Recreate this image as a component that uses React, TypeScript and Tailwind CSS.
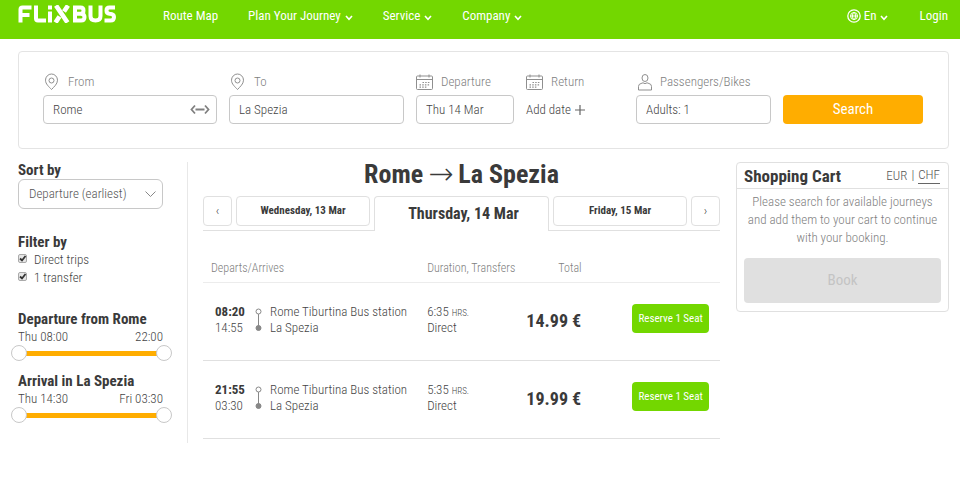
import { useState } from "react";
import type { ReactNode } from "react";

const navItems = [
  { label: "Route Map", menu: false },
  { label: "Plan Your Journey", menu: true },
  { label: "Service", menu: true },
  { label: "Company", menu: true },
];

const trips = [
  { departs: "08:20", arrives: "14:55", from: "Rome Tiburtina Bus station", to: "La Spezia", duration: "6:35", price: "14.99 €" },
  { departs: "21:55", arrives: "03:30", from: "Rome Tiburtina Bus station", to: "La Spezia", duration: "5:35", price: "19.99 €" },
];

function Logo() {
  return (
    <svg width="98" height="18" viewBox="0 0 98 18" fill="none" stroke="#fff" strokeWidth="4" role="img" aria-label="FlixBus">
      <path d="M2.5 17.5V4.5Q2.5 2.5 4.5 2.5H13.5M2.5 10H11.5" />
      <path d="M18 .5V13.5Q18 15.5 20 15.5H28" />
      <path d="M32 6.5V17.5" />
      <path d="M32 .5V4.5" />
      <path d="M38 .5L49.5 17.5M50 .5L46 6.5M41.5 11.5L37.5 17.5" strokeWidth="4.6" />
      <path d="M57 2.5H62.5Q65.500 2.5 65.500 5.5Q65.500 8.700 62.500 8.700H57H63Q66.500 9 66.500 12Q66.500 15.5 63 15.5H57ZM57 .7V17.300" />
      <path d="M72.500 .5V11Q72.500 15.5 77.500 15.5Q82.500 15.5 82.500 11V.5" />
      <path d="M97 2.5H91.500Q88.500 2.5 88.500 5.500Q88.500 8.500 91.500 8.800Q96 9 96 12Q96 15.5 92.500 15.5H86.500" />
    </svg>
  );
}

function Caret() {
  return (
    <svg width="8" height="6" viewBox="0 0 8 6" fill="none" stroke="currentColor" strokeWidth="1.6" className="mt-1" aria-hidden="true">
      <path d="M1 1L4 4.300L7 1" />
    </svg>
  );
}

function PinIcon() {
  return (
    <svg width="17" height="18" viewBox="0 0 17 18" fill="none" stroke="#8f8f8f" aria-hidden="true">
      <path d="M8.5 16.5C6 13.8 2.5 11 2.5 7.2A6 6.200 0 0 1 14.5 7.2C14.5 11 11 13.8 8.5 16.5Z" />
      <circle cx="8.5" cy="7.5" r="2.5" />
    </svg>
  );
}

function CalendarIcon() {
  return (
    <svg width="17" height="16" viewBox="0 0 17 16" fill="none" stroke="#8f8f8f" aria-hidden="true">
      <rect x=".5" y="2" width="16" height="13.5" rx="1" />
      <path d="M.5 5.5H16.5M4 .5V3.5M13 .5V3.5" />
      <path d="M6.5 8.5H14M3.5 10.8H14M3.5 13.2H11" strokeDasharray="1.5 1.2" strokeWidth="1.2" />
    </svg>
  );
}

function PersonIcon() {
  return (
    <svg width="14" height="17" viewBox="0 0 14 17" fill="none" stroke="#8f8f8f" aria-hidden="true">
      <ellipse cx="7" cy="4" rx="3" ry="3.5" />
      <path d="M.5 16V12.5Q.5 10 3 9.5L5 8.8Q7 10.5 9 8.8L11 9.5Q13.5 10 13.5 12.5V16Z" />
    </svg>
  );
}

function GlobeIcon() {
  return (
    <svg width="14" height="14" viewBox="0 0 14 14" fill="none" stroke="currentColor" aria-hidden="true">
      <circle cx="7" cy="7" r="6.2" strokeWidth="1.3" />
      <circle cx="7" cy="7" r="3.5" />
      <ellipse cx="7" cy="7" rx="1.5" ry="3.5" />
      <path d="M3.5 7H10.5" />
    </svg>
  );
}

function Field({ id, icon, label, children }: { id: string; icon: ReactNode; label: string; children: ReactNode }) {
  return (
    <div className="flex min-w-0 flex-col gap-[3px]">
      <label htmlFor={id} className="flex h-5 items-center gap-2 text-[#808080]">
        {icon}
        {label}
      </label>
      {children}
    </div>
  );
}

const inputClass = "h-[29px] w-full min-w-0 rounded border border-[#c8c8c8] bg-white px-[9px] text-[#444] outline-none";

function CheckItem({ id, label }: { id: string; label: string }) {
  const [on, setOn] = useState(true);
  return (
    <div className="flex h-[18px] items-center gap-[7px]">
      <span className="relative mb-[3px] flex">
        <input
          id={id}
          type="checkbox"
          checked={on}
          onChange={() => setOn(!on)}
          className="size-[9px] appearance-none rounded-xs border border-[#aaa] bg-[#e6e6e6]"
        />
        {on && (
          <svg width="9" height="9" viewBox="0 0 9 9" fill="none" stroke="#333" strokeWidth="1.8" className="pointer-events-none absolute inset-0" aria-hidden="true">
            <path d="M2 4.5L4 6.5L7.5 2" />
          </svg>
        )}
      </span>
      <label htmlFor={id}>{label}</label>
    </div>
  );
}

const thumbClass =
  "pointer-events-none absolute inset-0 m-0 w-full appearance-none bg-transparent [&::-webkit-slider-thumb]:pointer-events-auto [&::-webkit-slider-thumb]:size-4 [&::-webkit-slider-thumb]:appearance-none [&::-webkit-slider-thumb]:rounded-full [&::-webkit-slider-thumb]:border [&::-webkit-slider-thumb]:border-[#c8c8c8] [&::-webkit-slider-thumb]:bg-white";

function TimeRange({ title, from, to }: { title: string; from: string; to: string }) {
  return (
    <section>
      <h2 className="text-[15px] leading-[18px] font-bold text-[#3a3a3a]">{title}</h2>
      <div className="flex h-[17px] items-center justify-between">
        <span>{from}</span>
        <span>{to}</span>
      </div>
      <div className="relative -mr-[9px] -ml-[7px] flex h-4 items-center px-2">
        <div className="h-[5px] w-full bg-[#ffad00]" />
        <input type="range" aria-label={`${title}, earliest`} min={0} max={100} defaultValue={0} className={thumbClass} />
        <input type="range" aria-label={`${title}, latest`} min={0} max={100} defaultValue={100} className={thumbClass} />
      </div>
    </section>
  );
}

const dayClass = "h-[30px] rounded border border-[#e0e0e0] text-[#3a3a3a]";

export default function App() {
  return (
    <div className="min-h-screen bg-white font-['Roboto_Condensed','Liberation_Sans_Narrow',Roboto,sans-serif] text-[13px] font-light text-[#444]">
      <header className="flex h-[39px] items-start bg-[#73d700] pr-3 pl-[18px] font-normal text-white">
        <a href="#home" className="mt-[5px]">
          <Logo />
        </a>
        <nav className="ml-[47px] flex h-8 flex-1 items-center gap-[30px]">
          {navItems.map((item) => (
            <a key={item.label} href="#menu" className="flex items-center gap-1 whitespace-nowrap">
              {item.label}
              {item.menu && <Caret />}
            </a>
          ))}
        </nav>
        <div className="flex h-8 items-center gap-8">
          <button type="button" className="flex items-center gap-[3px]">
            <GlobeIcon />
            En
            <Caret />
          </button>
          <a href="#login">Login</a>
        </div>
      </header>

      <form
        onSubmit={(e) => e.preventDefault()}
        className="mt-3 mr-[11px] ml-[18px] grid grid-cols-[174fr_175fr_98fr_98fr_135fr_140fr] items-end gap-3 rounded border border-[#e4e4e4] pt-5 pr-[25px] pb-6 pl-6"
      >
        <Field id="from" icon={<PinIcon />} label="From">
          <div className="relative">
            <input id="from" defaultValue="Rome" className={inputClass} />
            <button type="button" aria-label="Swap cities" className="absolute top-[9px] right-[7px]">
              <svg width="20" height="11" viewBox="0 0 20 11" fill="none" stroke="#808080" strokeWidth="1.8">
                <path d="M5 1.5L1.5 5.5L5 9.5M15 1.5L18.5 5.5L15 9.5M5.5 5.5H14.5" />
              </svg>
            </button>
          </div>
        </Field>
        <Field id="to" icon={<PinIcon />} label="To">
          <input id="to" defaultValue="La Spezia" className={inputClass} />
        </Field>
        <Field id="departure" icon={<CalendarIcon />} label="Departure">
          <input id="departure" defaultValue="Thu 14 Mar" className={inputClass} />
        </Field>
        <Field id="return" icon={<CalendarIcon />} label="Return">
          <button id="return" type="button" className="flex h-[29px] items-center gap-1 text-[#444]">
            Add date
            <svg width="10" height="10" viewBox="0 0 10 10" stroke="#666" strokeWidth="1.2" aria-hidden="true">
              <path d="M5 0V10M0 5H10" />
            </svg>
          </button>
        </Field>
        <Field id="passengers" icon={<span className="pl-[2px]"><PersonIcon /></span>} label="Passengers/Bikes">
          <input id="passengers" defaultValue="Adults: 1" className={inputClass} />
        </Field>
        <button type="submit" className="h-[29px] rounded bg-[#ffad00] text-[15px] font-normal text-white">
          Search
        </button>
      </form>

      <main className="mt-[13px] mr-[11px] ml-[18px] flex items-start">
        <aside className="w-[170px] shrink-0 border-r border-[#e8e8e8] pr-6 pb-5">
          <label htmlFor="sort" className="block text-[15px] leading-[17px] font-bold text-[#3a3a3a]">
            Sort by
          </label>
          <div className="relative">
            <select id="sort" className="h-[30px] w-full appearance-none rounded-md border border-[#c8c8c8] bg-white px-[10px] text-[#555]">
              <option>Departure (earliest)</option>
            </select>
            <svg width="11" height="7" viewBox="0 0 11 7" fill="none" stroke="#888" className="pointer-events-none absolute top-3 right-[7px]" aria-hidden="true">
              <path d="M.5 .5L5.5 5.5L10.5 .5" />
            </svg>
          </div>
          <h2 className="mt-6 text-[15px] leading-[18px] font-bold text-[#3a3a3a]">Filter by</h2>
          <CheckItem id="direct" label="Direct trips" />
          <CheckItem id="transfer" label="1 transfer" />
          <div className="mt-[23px] flex flex-col gap-[11px]">
            <TimeRange title="Departure from Rome" from="Thu 08:00" to="22:00" />
            <TimeRange title="Arrival in La Spezia" from="Thu 14:30" to="Fri 03:30" />
          </div>
        </aside>

        <section className="mr-4 ml-[15px] min-w-0 flex-1">
          <h1 className="flex h-[34px] justify-center gap-[5px] text-[26px] leading-6 font-bold text-[#3a3a3a]">
            Rome <span className="font-['DejaVu_Sans'] text-[30px] font-light">→</span> La Spezia
          </h1>
          <div className="flex">
            <div className="flex flex-[172] gap-1 border-b border-[#e0e0e0] pr-1 pb-1">
              <button type="button" aria-label="Previous day" className={`${dayClass} w-[29px]`}>‹</button>
              <button type="button" className={`${dayClass} flex-1 text-[11px] font-bold`}>Wednesday, 13 Mar</button>
            </div>
            <button type="button" className="flex-[174] rounded-t border border-b-0 border-[#e0e0e0] pl-1 text-base font-bold text-[#3a3a3a]">
              Thursday, 14 Mar
            </button>
            <div className="flex flex-[172] gap-1 border-b border-[#e0e0e0] pb-1 pl-1">
              <button type="button" className={`${dayClass} flex-1 text-[11px] font-bold`}>Friday, 15 Mar</button>
              <button type="button" aria-label="Next day" className={`${dayClass} w-[29px]`}>›</button>
            </div>
          </div>
          <table className="mt-6 w-full table-fixed border-collapse text-left">
            <colgroup>
              <col className="w-[42%]" />
              <col className="w-[19%]" />
              <col className="w-[22%]" />
              <col className="w-[17%]" />
            </colgroup>
            <thead className="text-xs text-[#808080]">
              <tr className="h-[27px] border-b border-[#ececec]">
                <th className="pl-2 font-light">Departs/Arrives</th>
                <th className="pl-[7px] font-light whitespace-nowrap">Duration, Transfers</th>
                <th className="pl-10 font-light">Total</th>
                <th aria-label="Reserve" />
              </tr>
            </thead>
            <tbody>
              {trips.map((trip) => (
                <tr key={trip.departs} className="h-[78px] border-b border-[#e0e0e0] leading-4">
                  <td className="pb-[3px] pl-3">
                    <div className="flex items-center">
                      <div className="w-10">
                        <div className="font-bold text-[#3a3a3a]">{trip.departs}</div>
                        <div>{trip.arrives}</div>
                      </div>
                      <svg width="7" height="24" viewBox="0 0 7 24" fill="none" stroke="#888" aria-hidden="true">
                        <circle cx="3.5" cy="3.5" r="2.5" />
                        <path d="M3.5 6V18" />
                        <circle cx="3.5" cy="20" r="2.5" fill="#888" />
                      </svg>
                      <div className="ml-2 whitespace-nowrap">
                        <div>{trip.from}</div>
                        <div>{trip.to}</div>
                      </div>
                    </div>
                  </td>
                  <td className="pb-[3px] pl-[7px]">
                    <div className="h-4">
                      {trip.duration} <span className="text-[9px] leading-none">HRS.</span>
                    </div>
                    <div>Direct</div>
                  </td>
                  <td className="pl-2 text-lg leading-5 font-bold text-[#3a3a3a]">{trip.price}</td>
                  <td className="pb-[5px]">
                    <button type="button" className="h-[29px] w-[77px] rounded bg-[#73d700] text-[11px] font-normal whitespace-nowrap text-white">
                      Reserve 1 Seat
                    </button>
                  </td>
                </tr>
              ))}
            </tbody>
          </table>
        </section>

        <aside className="w-[213px] shrink-0 rounded border border-[#e0e0e0]">
          <div className="flex h-[26px] items-center justify-between border-b border-[#e0e0e0] pr-2 pl-[7px]">
            <h2 className="text-[17px] leading-6 font-bold text-[#3a3a3a]">Shopping Cart</h2>
            <div className="flex gap-1 leading-4 text-[#555]">
              <button type="button">EUR</button>
              <span>|</span>
              <button type="button" className="border-b border-[#666]">CHF</button>
            </div>
          </div>
          <p className="px-2 pt-1 text-center leading-[18px] text-[#808080]">
            Please search for available journeys and add them to your cart to continue with your booking.
          </p>
          <div className="px-[7px] pt-[11px] pb-2">
            <button type="button" disabled className="h-[45px] w-full rounded bg-[#e0e0e0] text-[15px] font-normal text-[#c4c4c4]">
              Book
            </button>
          </div>
        </aside>
      </main>
    </div>
  );
}
